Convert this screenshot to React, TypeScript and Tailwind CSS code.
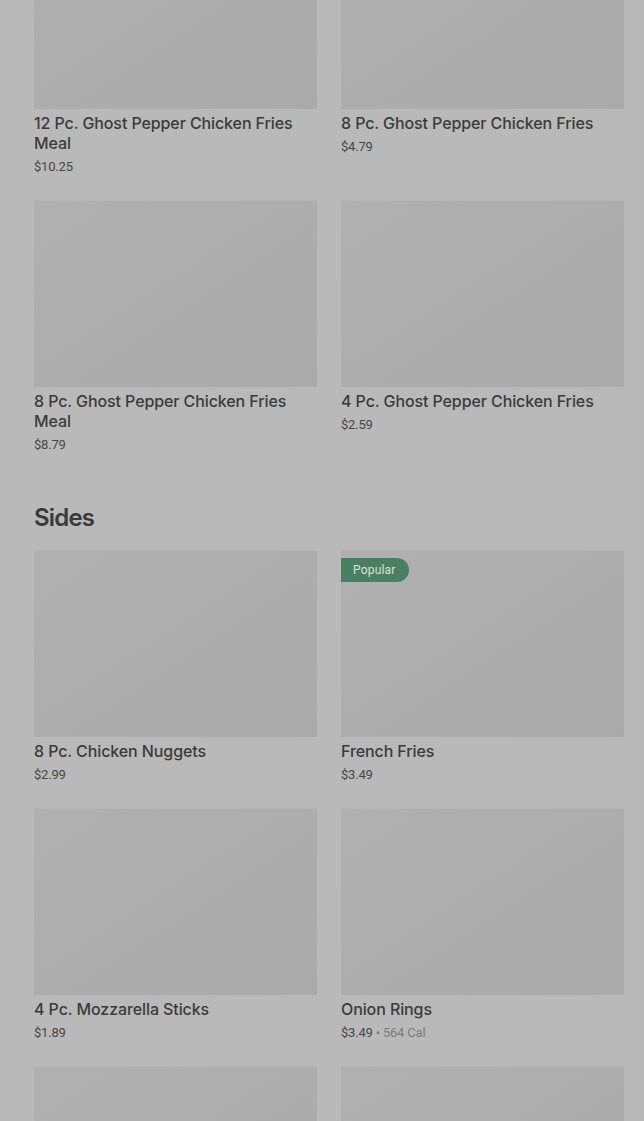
import React from "react";

type Item = { name: string; price: string; cal?: string; popular?: boolean };

const meals: Item[] = [
  { name: "12 Pc. Ghost Pepper Chicken Fries Meal", price: "$10.25" },
  { name: "8 Pc. Ghost Pepper Chicken Fries", price: "$4.79" },
  { name: "8 Pc. Ghost Pepper Chicken Fries Meal", price: "$8.79" },
  { name: "4 Pc. Ghost Pepper Chicken Fries", price: "$2.59" },
];

const sides: Item[] = [
  { name: "8 Pc. Chicken Nuggets", price: "$2.99" },
  { name: "French Fries", price: "$3.49", popular: true },
  { name: "4 Pc. Mozzarella Sticks", price: "$1.89" },
  { name: "Onion Rings", price: "$3.49", cal: "564 Cal" },
  { name: "", price: "" },
  { name: "", price: "" },
];

function Card({ item }: { item: Item }) {
  return (
    <div className="flex flex-col">
      <div className="relative h-[187px] w-full bg-gradient-to-br from-[#b0b0b0] to-[#aaaaaa] border-t border-[#b4b4b4]">
        {item.popular && (
          <div className="absolute left-0 top-[7px] h-[24px] pl-[12px] pr-[13px] flex items-center rounded-r-full bg-[#4b7f63] text-[12px] text-[#d6e2da] tracking-[0.2px]">
            Popular
          </div>
        )}
      </div>
      {item.name && (
        <>
          <div
            className="mt-[4px] text-[16px] leading-[20px] font-medium text-[#3b3b3b] pr-2 tracking-[-0.1px]"
            style={{ fontFamily: "Inter, Roboto, sans-serif" }}
          >
            {item.name}
          </div>
          <div className="mt-[4px] text-[13px] leading-[20px] text-[#474747] tracking-[-0.2px]">
            {item.price}
            {item.cal && (
              <span className="text-[#7c7c7c]"> • {item.cal}</span>
            )}
          </div>
        </>
      )}
    </div>
  );
}

export default function App() {
  return (
    <div
      className="min-h-[1121px] w-[644px] bg-[#b9b9b9] overflow-hidden"
      style={{ fontFamily: "Roboto, 'Noto Sans', sans-serif" }}
    >
      <div className="h-[1121px] overflow-hidden pl-[34px] pr-[20px]">
        <div className="mt-[-78px] grid grid-cols-2 gap-x-[24px] gap-y-[23px]">
          {meals.map((m, i) => (
            <Card key={i} item={m} />
          ))}
        </div>
        <h2
          className="mt-[47px] mb-[16px] text-[24px] leading-[32px] font-semibold text-[#3a3a3a] tracking-[-0.8px]"
          style={{ fontFamily: "Inter, Roboto, sans-serif" }}
        >
          Sides
        </h2>
        <div className="grid grid-cols-2 gap-x-[24px] gap-y-[23px]">
          {sides.map((m, i) => (
            <Card key={i} item={m} />
          ))}
        </div>
      </div>
    </div>
  );
}
